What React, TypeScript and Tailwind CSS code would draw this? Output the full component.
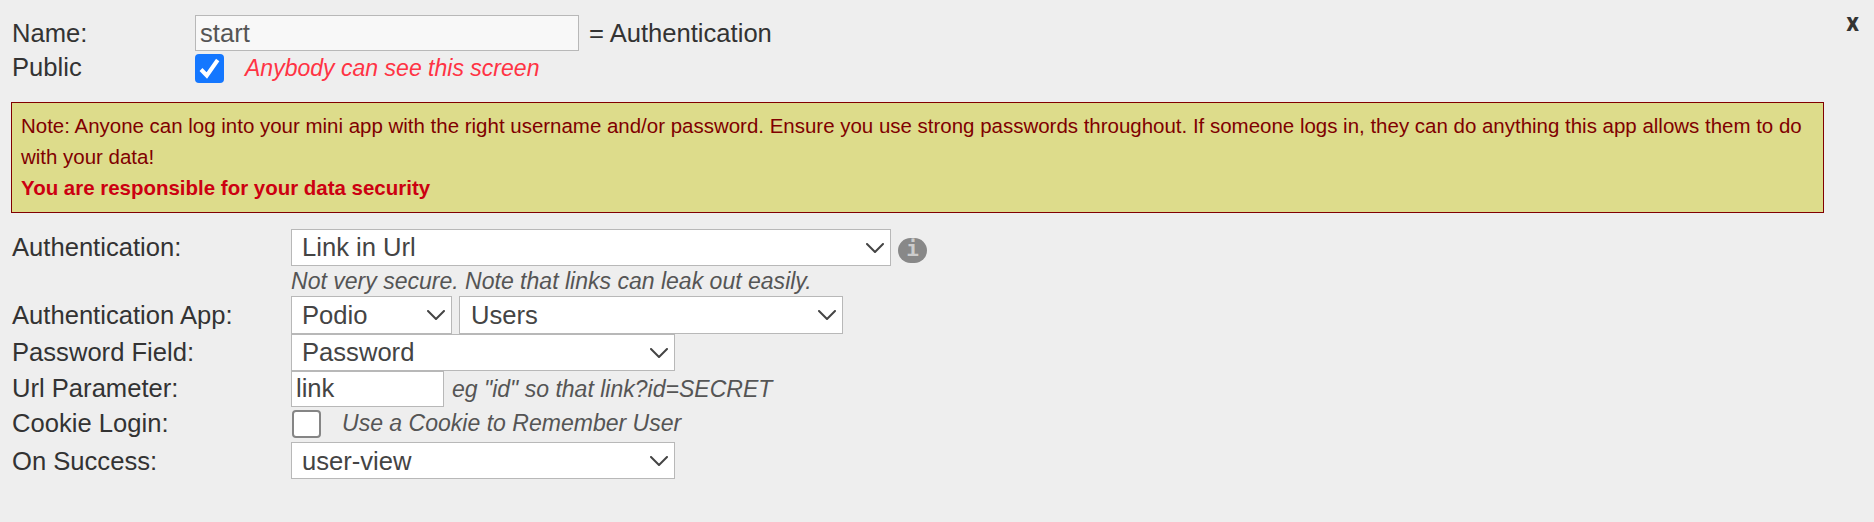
import type { ReactNode } from "react";

function Select({ value, className }: { value: string; className: string }) {
  return (
    <div className={`flex justify-between border border-[#b8b8b8] bg-white pl-2.5 text-[#444] ${className}`}>
      <span>{value}</span>
      <svg className="mt-[13px] mr-1.5 h-2.5 w-[18px] shrink-0" viewBox="0 0 18 10" fill="none" stroke="#444" strokeWidth="2" strokeLinecap="round" strokeLinejoin="round">
        <path d="M1 1 L9 9 L17 1" />
      </svg>
    </div>
  );
}

function Hint({ children, className = "" }: { children: ReactNode; className?: string }) {
  return <span className={`text-[23.04px] italic text-[#555] ${className}`}>{children}</span>;
}

function Row({ label, className, children, labelClassName = "" }: { label: string; className: string; children: ReactNode; labelClassName?: string }) {
  return (
    <div className={`flex ${className}`}>
      <div className={`w-[280px] shrink-0 pl-px ${labelClassName}`}>{label}</div>
      {children}
    </div>
  );
}

export default function App() {
  return (
    <main className="h-[522px] w-full overflow-hidden whitespace-nowrap bg-[#eee] pl-[11px] pr-[15px] pt-[15px] font-['Liberation_Sans',Arial,sans-serif] text-[25.6px] leading-[36px] text-[#333]">
      <div className="flex h-9">
        <div className="w-[184px] shrink-0 pl-px">Name:</div>
        <div className="h-9 w-[384px] border border-[#b8b8b8] bg-[#f8f8f8] pl-1 leading-[34px] text-[#555]">start</div>
        <span className="ml-[10px]">= Authentication</span>
        <span className="ml-auto font-[Roboto,sans-serif] text-[25px] font-bold leading-[16px]">x</span>
      </div>
      <div className="flex h-[51px]">
        <div className="w-[184px] shrink-0 pl-px leading-[33px]">Public</div>
        <div className="mt-[3px] flex h-[29px] w-[29px] items-center justify-center rounded-[4px] bg-[#1477ff]">
          <svg className="h-[21px] w-[21px]" viewBox="0 0 21 21" fill="none" stroke="white" strokeWidth="4">
            <path d="M2 11.5 L7.8 17.5 L18.7 2" />
          </svg>
        </div>
        <Hint className="ml-[21px] leading-[34px] text-[#ff3344]">Anybody can see this screen</Hint>
      </div>
      <div className="h-[111px] w-[1813px] border border-[#800000] bg-[#dddc8b] pl-[9px] pt-[7px] text-[20.48px] leading-[31px] text-[#800000]">
        <div>Note: Anyone can log into your mini app with the right username and/or password. Ensure you use strong passwords throughout. If someone logs in, they can do anything this app allows them to do</div>
        <div>with your data!</div>
        <div className="font-bold text-[#cc0011]">You are responsible for your data security</div>
      </div>
      <Row label="Authentication:" className="mt-4 h-[37px]">
        <Select value="Link in Url" className="w-[600px] leading-[35px]" />
        <div className="ml-[7px] mt-[9px] flex h-[25px] w-[29px] justify-center rounded-full bg-[#888] font-['DejaVu_Sans_Mono',monospace] text-[21px] font-bold leading-[23px] text-[#ccc]">i</div>
      </Row>
      <div className="h-[30px] pl-[280px] leading-[30px]">
        <Hint className="block">Not very secure. Note that links can leak out easily.</Hint>
      </div>
      <Row label="Authentication App:" className="h-[38px]" labelClassName="leading-[38px]">
        <Select value="Podio" className="w-[161px]" />
        <Select value="Users" className="ml-[7px] w-[384px] pl-[11px]" />
      </Row>
      <Row label="Password Field:" className="h-[37px]">
        <Select value="Password" className="w-[384px] leading-[35px]" />
      </Row>
      <Row label="Url Parameter:" className="h-9 leading-[35px]">
        <div className="w-[153px] border border-[#b8b8b8] bg-white pl-1 leading-[33px] text-[#444]">link</div>
        <Hint className="ml-2 leading-[36px]">eg "id" so that link?id=SECRET</Hint>
      </Row>
      <Row label="Cookie Login:" className="h-[35px] leading-[32px]">
        <div className="ml-px mt-[3px] h-[28px] w-[29px] rounded-[4px] border-2 border-[#858585] bg-white" />
        <Hint className="ml-[21px]">Use a Cookie to Remember User</Hint>
      </Row>
      <Row label="On Success:" className="h-[37px]" labelClassName="leading-[38px]">
        <Select value="user-view" className="w-[384px]" />
      </Row>
    </main>
  );
}
